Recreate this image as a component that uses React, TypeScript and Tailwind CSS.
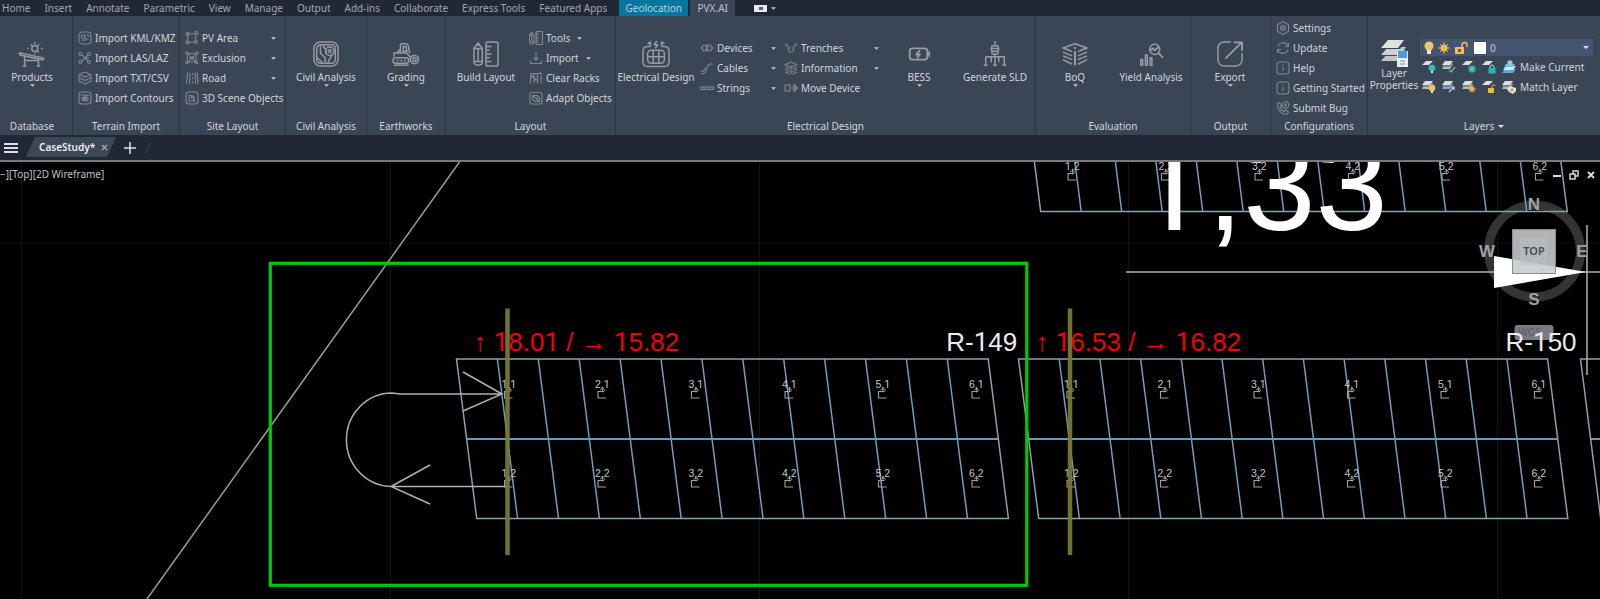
import type { ReactNode } from "react";

type IconName =
  | "products" | "civil" | "grading" | "build" | "electrical" | "bess" | "sld" | "boq" | "yield" | "export"
  | "kml" | "las" | "layers" | "contours" | "area" | "exclusion" | "road" | "scene" | "import" | "racks" | "adapt"
  | "devices" | "cables" | "strings" | "trenches" | "info" | "move" | "settings" | "update" | "help" | "phone";

const drawings: Record<IconName, ReactNode> = {
  products: (
    <>
      <circle cx="17" cy="8" r="3.2" />
      <path d="M17 1v2M17 13v1.500M10.500 8h-1.500M23.500 8h2M12.500 3.500l1.300 1.300M21.500 3.500l-1.300 1.300M21.500 12.500l-1.300-1.300" />
      <path d="M0 12.500l27 6M1 15l25 5.500M0 12.500l1 2.500M27 18.500l-1 2M6 17v10M21 20v7M6 21h15M4 27h4M19 27h4" />
    </>
  ),
  civil: (
    <>
      <rect x="1" y="1" width="26" height="26" rx="7" />
      <rect x="4" y="4" width="20" height="20" rx="4" />
      <path d="M8 5v8l5 5v5M11 5l3 5v4M4 18l6 5M21 14l-5 9" />
      <circle cx="18" cy="11" r="4.500" />
      <circle cx="18" cy="11" r="1.500" />
    </>
  ),
  grading: (
    <>
      <path d="M8 13V5c0-1.500 1-2 2-2h4c1.500 0 2 .8 2.300 2l1.700 8M11 6h3l1 5h-4zM1 17v-4h14l4 5M4 13l4-4" />
      <rect x="0" y="18" width="17" height="6" rx="3" />
      <path d="M4 21h10" strokeDasharray="2 2" />
      <circle cx="23" cy="20" r="4.500" />
      <circle cx="23" cy="20" r="2" />
      <path d="M1 26h16" />
    </>
  ),
  build: (
    <>
      <path d="M1 8l4.500-6L10 8v15c0 2-2 3-4.500 3S1 25 1 23zM1 8h9M1 22h9M5.500 8v14M4 4.500h3" />
      <rect x="14" y="1" width="13" height="26" rx="2" />
      <path d="M14 6h6M14 10h4M14 14h6M14 18h4M14 22h6" />
    </>
  ),
  electrical: (
    <>
      <path d="M8 6H5C2 6 0 8 0 11v12c0 3 2 4.500 5 4.500h18c3 0 5-1.500 5-4.500V11c0-3-2-5-5-5h-3" />
      <path d="M15 0l-3 4h4l-3 4M5 3l3-2v5M23 3l-3-2v5" />
      <rect x="5" y="10" width="18" height="14" rx="4" />
      <path d="M5 17h18M11 10v14M17 10v14" />
    </>
  ),
  bess: (
    <>
      <rect x="4" y="8" width="19" height="12" rx="3" strokeWidth="2" />
      <path d="M25 11v6M15 10l-4 4.500h4l-3 4" strokeWidth="2" />
    </>
  ),
  sld: (
    <path d="M14 0v4M11 5h6l1 3-1 6h-6l-1-6zM10 8h8M11 11h6M14 14v12M4 17h20v9M4 17v9M10 17v6M18 17v6M2 26h4M12 26h4M22 26h4" />
  ),
  boq: (
    <>
      <path d="M14 3l13 4.500-7 2.500M14 3L1 7.500l7 2.500M1 12l10 4M1 16l10 4M1 20l10 5M27 12l-10 4M27 16l-10 4M27 20l-10 5M1 7.500l10 4M27 7.500l-10 4" />
      <path d="M14 11v15M14 6.500v2" strokeWidth="2.200" />
    </>
  ),
  yield: (
    <>
      <path d="M3 26v-6h2v6zM8 26V15h2v11zM13 26v-8h2v8z" />
      <circle cx="18" cy="9" r="5.500" />
      <path d="M22 13l5 5M13 10l3-2 2 2 5-4" strokeWidth="2" />
    </>
  ),
  export: (
    <>
      <path d="M15 1H8C4 1 1 4 1 8v12c0 4 3 7 7 7h12c4 0 7-3 7-7v-7" />
      <path d="M9 19L26 2M18 1.500h9v9" strokeWidth="2" />
    </>
  ),
  kml: (
    <>
      <rect x="2" y="2" width="24" height="24" rx="7" />
      <path d="M7 8h7v6H7zM13 20c2-6 5-4 8-3M18 7l4 4M8 20l3-3" />
    </>
  ),
  las: (
    <>
      <circle cx="5" cy="6" r="3" /><circle cx="22" cy="6" r="3" /><circle cx="5" cy="22" r="3" /><circle cx="22" cy="22" r="3" />
      <path d="M8 8l12 12M20 8L8 20M14 14h8" />
    </>
  ),
  layers: <path d="M14 2L26 7 14 12 2 7zM2 7v13l12 6 12-6V7M2 13l12 6 12-6" />,
  contours: (
    <>
      <rect x="2" y="2" width="24" height="24" rx="6" />
      <path d="M6 9c5-5 11 3 16-1M6 14h16M7 19c5-3 9 3 14-1M10 12h8v4h-8z" />
    </>
  ),
  area: (
    <>
      <path d="M5 6L22 5 21 21 6 23z" />
      <circle cx="5" cy="6" r="3" /><circle cx="23" cy="4" r="3" /><circle cx="22" cy="22" r="3" /><circle cx="5" cy="23" r="3" />
    </>
  ),
  exclusion: (
    <>
      <path d="M5 5h17v17H5zM8 8l12 12M20 8L8 20M9 14h9" />
      <circle cx="4" cy="4" r="2.500" /><circle cx="24" cy="4" r="2.500" /><circle cx="23" cy="23" r="2.500" /><circle cx="4" cy="23" r="2.500" />
    </>
  ),
  road: <path d="M5 3L3 26M10 3L9 26M15 4v4M15 12v4M15 20v5M20 3l1 23M24 3l2 23" />,
  scene: (
    <>
      <rect x="2" y="2" width="24" height="24" rx="6" />
      <path d="M8 7v13h13M8 8l10 3v8M12 14h5v5M13 9v5" />
    </>
  ),
  import: <path d="M3 19v6h22v-6M14 4v14M9 13l5 5 5-5" />,
  racks: <path d="M3 5h22M3 5v20M10 5v20M17 5v20M24 9v16M3 13h7M10 18h7M5 8l14 14M22 2l4 5" />,
  adapt: (
    <>
      <rect x="2" y="3" width="24" height="23" rx="4" />
      <path d="M7 9h9l5 4v8h-9l-5-5zM7 9l14 12M12 14h6" />
    </>
  ),
  devices: (
    <>
      <circle cx="10" cy="14" r="6" /><circle cx="18" cy="14" r="6" />
      <path d="M1 14h3M24 14h3" />
    </>
  ),
  cables: <path d="M2 25c9 2 9-4 12-11s5-9 12-8M2 21c6 1 7-3 9-8" />,
  strings: <path d="M1 12h26v5H1zM8 12v5M14 12v5M20 12v5" />,
  trenches: <path d="M2 8h5l3 14h8l3-14h5M10 14h3M15 14h3M4 5v3M24 5v3" />,
  info: <path d="M14 2l12 5-12 5L2 7zM2 12l9 4M2 17l9 4M2 22l9 4M26 12l-9 4M26 17l-9 4M26 22l-9 4M14 13v13" />,
  move: <path d="M2 8h10v12H2zM15 14h11M21 8v12M18 11l3-4 3 4M18 17l3 4 3-4M24 11l3 3-3 3" />,
  settings: (
    <>
      <path d="M14 1l11 6.500v13L14 27 3 20.500v-13z" />
      <circle cx="14" cy="14" r="5" />
      <circle cx="14" cy="14" r="1.500" />
    </>
  ),
  update: <path d="M25 4v7h-7M3 24v-7h7M4 11C7 2 19 0 25 10M24 17C21 26 9 28 3 18" />,
  help: (
    <>
      <rect x="2" y="2" width="24" height="24" rx="6" />
      <path d="M14 12v8M14 7v2" />
    </>
  ),
  phone: (
    <>
      <path d="M3 5l4-2 4 6-3 3c1 4 4 7 8 9l3-3 6 4-2 4c-10 3-22-9-20-21z" />
      <circle cx="19" cy="8" r="6.500" />
      <path d="M16 8h6M19 5v6" />
    </>
  ),
};

function Icon({ name, big = false }: { name: IconName; big?: boolean }) {
  return (
    <svg
      viewBox="0 0 28 28"
      aria-hidden="true"
      className={big ? "size-[26px] shrink-0 overflow-visible text-[#989ca4]" : "size-3.5 shrink-0 text-[#808791]"}
      fill="none"
      stroke="currentColor"
      strokeWidth={big ? 1.6 : 2.2}
      strokeLinejoin="round"
    >
      {drawings[name]}
    </svg>
  );
}

function Caret({ wide = false }: { wide?: boolean }) {
  return (
    <svg viewBox="0 0 8 4" aria-hidden="true" className={wide ? "h-[3px] w-[6px] fill-[#dfe3e8]" : "h-[3px] w-[5px] fill-[#c4c8ce]"}>
      <path d="M0 0h8L4 4z" />
    </svg>
  );
}

function BigButton({ icon, label, caret = false, width }: { icon: IconName; label: string; caret?: boolean; width: string }) {
  return (
    <button type="button" className={`flex h-[54px] shrink-0 flex-col items-center ${width}`}>
      <Icon name={icon} big />
      <span className="mt-[3px] leading-[14px]">{label}</span>
      {caret && <Caret />}
    </button>
  );
}

type Row = { icon: IconName; label: string; caret?: boolean };

function Rows({ items, width, spread = true }: { items: Row[]; width: string; spread?: boolean }) {
  return (
    <div className={`flex shrink-0 flex-col ${width}`}>
      {items.map((r) => (
        <button key={r.label} type="button" className="flex h-5 items-center gap-[3px] text-left">
          <Icon name={r.icon} />
          <span>{r.label}</span>
          {r.caret && (
            <span className={spread ? "ml-auto" : "ml-1"}>
              <Caret />
            </span>
          )}
        </button>
      ))}
    </div>
  );
}

function Panel({ title, width, children, last = false, pad = "" }: { title: ReactNode; width: string; children: ReactNode; last?: boolean; pad?: string }) {
  return (
    <section className={`flex flex-col ${last ? "" : "shrink-0 border-r border-[#2b3443]"} ${width} ${pad}`}>
      <div className="flex h-[104px] items-center">{children}</div>
      <h2 className="flex h-[15px] items-start justify-center gap-1 leading-[13px]">{title}</h2>
    </section>
  );
}

const menus = ["Home", "Insert", "Annotate", "Parametric", "View", "Manage", "Output", "Add-ins", "Collaborate", "Express Tools", "Featured Apps"];

function MenuBar() {
  return (
    <nav className="flex h-4 items-stretch bg-[#212835] text-[#a3a9b2]">
      <div className="flex gap-[14px] pr-3 pl-[2px]">
        {menus.map((m) => (
          <button key={m} type="button" className="leading-[15px]">
            {m}
          </button>
        ))}
      </div>
      <button type="button" className="w-[69px] bg-[#07769f] leading-[15px] text-[#b5d3e1]">Geolocation</button>
      <button type="button" className="ml-[2px] w-[45px] bg-[#3a4555] leading-[15px] text-[#bcc2ca]">PVX.AI</button>
      <button type="button" aria-label="Ribbon display" className="ml-[19px] flex items-center gap-1">
        <span className="flex h-[7px] w-[13px] items-center justify-center bg-[#e8eaec]">
          <span className="h-[3px] w-1 bg-[#5c6470]" />
        </span>
        <Caret />
      </button>
    </nav>
  );
}

function Sheets({ blue = false }: { blue?: boolean }) {
  return (
    <g>
      <path d="M0 9l3-5h8l-3 5z" fill={blue ? "#6fb4dc" : "#b9bdc2"} />
      <path d="M0 7l3-4h8L8 7z" fill="#7d838b" />
      <path d="M0 5l3-4h8L8 5z" fill="#dcdedf" />
    </g>
  );
}

const sheet = <path d="M0 5l4-4h7L7 5z" fill="#dcdedf" />;

const layerArt: Record<string, ReactNode> = {
  off: (<>{sheet}<circle cx="10" cy="8" r="3.300" fill="#38b9bd" /><path d="M9 11h2v2H9z" fill="#e5e7e9" /></>),
  isolate: (<><Sheets /><path d="M7 10l2 2 4-5" fill="none" stroke="#55b8b8" strokeWidth="1.500" /></>),
  freeze: (<>{sheet}<circle cx="10" cy="9" r="3.800" fill="#2f9c9e" /><path d="M10 6v6M7 9h6M8 7l4 4M12 7l-4 4" stroke="#65d0cd" strokeWidth=".7" /></>),
  lock: (<>{sheet}<path d="M8 9V7a2 2 0 014 0v2" fill="none" stroke="#c9d8da" /><rect x="6.500" y="8" width="7" height="5.500" fill="#32b4b4" /></>),
  make: (<><path d="M0 13l3-4h11l-3 4z" fill="#5fa7d3" /><path d="M1 10l3-4h10l-3 4z" fill="#dbe7ee" /><path d="M2 7l2-3h9l-2 3z" fill="#74b7df" /><circle cx="8" cy="3" r="2.700" fill="#8fc6ea" /></>),
  on: (<><Sheets /><circle cx="10" cy="8" r="3.300" fill="#f0c264" /><path d="M9 11h2v2H9z" fill="#e5e7e9" /></>),
  unisolate: (<><Sheets blue /><path d="M7 12l5-5M9 7h3v3" fill="none" stroke="#c5dcea" strokeWidth="1.200" /></>),
  thaw: (<><Sheets /><circle cx="10" cy="9" r="2.500" fill="#f1b44c" /><path d="M10 5v8M6 9h8M7 6l6 6M13 6l-6 6" stroke="#f1b44c" strokeWidth=".8" /></>),
  unlock: (<>{sheet}<path d="M10 8V6a2 2 0 013.500 0" fill="none" stroke="#e8b45a" /><rect x="6" y="8" width="6" height="5" fill="#eeb556" /></>),
  match: (<><Sheets /><path d="M5 9l3-3 6 2v3l-3 3-4-2z" fill="#e8e3da" /><circle cx="10" cy="10" r="1.500" fill="#c98f4a" /></>),
};

function LayerTool({ kind, label, text }: { kind: string; label: string; text?: string }) {
  return (
    <button type="button" aria-label={label} className="flex shrink-0 items-center gap-1">
      <svg viewBox="0 0 14 14" aria-hidden="true" className="size-[14px]">{layerArt[kind]}</svg>
      {text}
    </button>
  );
}

function LayersPanel() {
  return (
    <div className="flex w-full items-start">
      <button type="button" className="flex w-[52px] shrink-0 flex-col items-center">
        <svg viewBox="0 0 28 28" aria-hidden="true" className="size-7">
          <path d="M1 22l7-8h18l-6 8z" fill="#c0c3c7" />
          <path d="M1 17l7-8h18l-6 8z" fill="#3b4555" />
          <path d="M1 16l7-8h18l-6 8z" fill="#cfd1d4" />
          <path d="M1 10l7-8h18l-6 8z" fill="#3b4555" />
          <path d="M1 9l7-8h16l-6 8z" fill="#e1e2e3" />
          <rect x="17" y="12" width="11" height="16" fill="#e9eef1" />
          <rect x="18" y="12" width="9" height="7" fill="#4b9fd6" />
          <path d="M20 12c0-3 5-3 5 0" fill="none" stroke="#8ec3e6" />
          <path d="M20 22h5M20 25h5" stroke="#8d99a3" />
        </svg>
        <span className="leading-3">
          Layer
          <br />
          Properties
        </span>
      </button>
      <div className="flex flex-1 flex-col pr-[7px]">
        <div className="flex h-[17px] items-center gap-1 bg-[#455470] pr-1 pl-[2px]">
          <svg viewBox="0 0 48 14" aria-hidden="true" className="h-[14px] w-12 shrink-0">
            <circle cx="7" cy="5" r="4.500" fill="#f6c667" />
            <path d="M5 9h4v4H5z" fill="#e9e6df" />
            <circle cx="22" cy="7" r="3.500" fill="#f2b64a" />
            <path d="M22 1v12M16 7h12M18 3l8 8M26 3l-8 8" stroke="#f2b64a" strokeWidth="1" />
            <rect x="33" y="6" width="9" height="7" fill="#f2be5c" />
            <path d="M40 6V4a2.500 2.500 0 015 0v2" fill="none" stroke="#f2be5c" strokeWidth="1.500" />
            <path d="M36 8h3v3h-3z" fill="#6b5b3a" />
          </svg>
          <span className="size-3 shrink-0 bg-white" />
          <select aria-label="Current layer" className="h-[17px] flex-1 appearance-none bg-transparent leading-4 text-[#c3c9d1] outline-none">
            <option>0</option>
          </select>
          <Caret wide />
        </div>
        <div className="mt-[1px] flex h-5 items-center gap-[6px] pl-[2px]">
          <LayerTool kind="off" label="Layer off" />
          <LayerTool kind="isolate" label="Isolate layer" />
          <LayerTool kind="freeze" label="Freeze layer" />
          <LayerTool kind="lock" label="Lock layer" />
          <LayerTool kind="make" label="Make Current" text="Make Current" />
        </div>
        <div className="flex h-5 items-center gap-[6px] pl-[2px]">
          <LayerTool kind="on" label="Layer on" />
          <LayerTool kind="unisolate" label="Unisolate layer" />
          <LayerTool kind="thaw" label="Thaw layer" />
          <LayerTool kind="unlock" label="Unlock layer" />
          <LayerTool kind="match" label="Match Layer" text="Match Layer" />
        </div>
      </div>
    </div>
  );
}

function Ribbon() {
  return (
    <div className="flex bg-[#3a4555] text-[#d3d6da]">
      <Panel title="Database" width="w-[73px]" pad="pr-2">
        <BigButton icon="products" label="Products" caret width="w-16" />
      </Panel>
      <Panel title="Terrain Import" width="w-[107px]">
        <Rows
          width="w-[106px] pl-[5px]"
          items={[
            { icon: "kml", label: "Import KML/KMZ" },
            { icon: "las", label: "Import LAS/LAZ" },
            { icon: "layers", label: "Import TXT/CSV" },
            { icon: "contours", label: "Import Contours" },
          ]}
        />
      </Panel>
      <Panel title="Site Layout" width="w-[106px]">
        <Rows
          width="w-[96px] pl-[5px]"
          items={[
            { icon: "area", label: "PV Area", caret: true },
            { icon: "exclusion", label: "Exclusion", caret: true },
            { icon: "road", label: "Road", caret: true },
            { icon: "scene", label: "3D Scene Objects" },
          ]}
        />
      </Panel>
      <Panel title="Civil Analysis" width="w-[81px]">
        <BigButton icon="civil" label="Civil Analysis" caret width="w-20" />
      </Panel>
      <Panel title="Earthworks" width="w-[79px]">
        <BigButton icon="grading" label="Grading" caret width="w-[78px]" />
      </Panel>
      <Panel title="Layout" width="w-[170px]">
        <BigButton icon="build" label="Build Layout" width="w-20" />
        <Rows
          width="w-[84px] pl-[3px]"
          spread={false}
          items={[
            { icon: "build", label: "Tools", caret: true },
            { icon: "import", label: "Import", caret: true },
            { icon: "racks", label: "Clear Racks" },
            { icon: "adapt", label: "Adapt Objects" },
          ]}
        />
      </Panel>
      <Panel title="Electrical Design" width="w-[420px]">
        <BigButton icon="electrical" label="Electrical Design" width="w-20" />
        <Rows
          width="w-[80px] pl-1"
          items={[
            { icon: "devices", label: "Devices", caret: true },
            { icon: "cables", label: "Cables", caret: true },
            { icon: "strings", label: "Strings", caret: true },
          ]}
        />
        <Rows
          width="w-[103px] pl-2"
          items={[
            { icon: "trenches", label: "Trenches", caret: true },
            { icon: "info", label: "Information", caret: true },
            { icon: "move", label: "Move Device" },
          ]}
        />
        <BigButton icon="bess" label="BESS" caret width="w-20" />
        <BigButton icon="sld" label="Generate SLD" width="w-[72px]" />
      </Panel>
      <Panel title="Evaluation" width="w-[155px]">
        <BigButton icon="boq" label="BoQ" caret width="w-[78px]" />
        <BigButton icon="yield" label="Yield Analysis" width="w-[74px]" />
      </Panel>
      <Panel title="Output" width="w-20">
        <BigButton icon="export" label="Export" caret width="w-[78px]" />
      </Panel>
      <Panel title="Configurations" width="w-[97px]">
        <Rows
          width="w-[96px] pl-[5px]"
          items={[
            { icon: "settings", label: "Settings" },
            { icon: "update", label: "Update" },
            { icon: "help", label: "Help" },
            { icon: "help", label: "Getting Started" },
            { icon: "phone", label: "Submit Bug" },
          ]}
        />
      </Panel>
      <Panel
        last
        width="min-w-[220px] flex-1"
        title={
          <>
            Layers
            <span className="pt-[5px]">
              <Caret wide />
            </span>
          </>
        }
      >
        <LayersPanel />
      </Panel>
    </div>
  );
}

function FileTabs() {
  return (
    <div className="flex h-[27px] items-stretch border-b-2 border-[#77797f] bg-[#212835] text-[#dcdfe3]">
      <button type="button" aria-label="Start menu" className="flex w-[26px] flex-col justify-center gap-[2px] pl-1">
        <span className="h-[2px] w-[14px] bg-current" />
        <span className="h-[2px] w-[14px] bg-current" />
        <span className="h-[2px] w-[14px] bg-current" />
      </button>
      <div className="mt-[2px] mb-[3px] flex w-[90px] items-center gap-[6px] bg-[#3b4657] pl-[13px] [clip-path:polygon(9px_0,100%_0,81px_100%,0_100%)]">
        <button type="button" className="font-semibold text-[#eceef0]">CaseStudy*</button>
        <button type="button" aria-label="Close CaseStudy">
          <svg viewBox="0 0 8 8" className="size-[7px] stroke-[#a9b0ba]" strokeWidth="1.500">
            <path d="M1 1l6 6M7 1L1 7" />
          </svg>
        </button>
      </div>
      <button type="button" aria-label="New drawing" className="ml-2 flex items-center">
        <svg viewBox="0 0 12 12" className="size-3 stroke-current" strokeWidth="1.500">
          <path d="M6 0v12M0 6h12" />
        </svg>
      </button>
      <svg viewBox="0 0 8 14" aria-hidden="true" className="ml-2 h-[14px] w-2 self-center stroke-[#3f4756]">
        <path d="M1 13L7 1" />
      </svg>
    </div>
  );
}

/* Plot lettering: the digit one is set in a face whose "1" has no foot. */
function Lettering({ children }: { children: string }) {
  return (
    <>
      {children.split(/(1)/).filter(Boolean).map((part, i) => (
        <tspan key={i} className={part === "1" ? "font-['Roboto',sans-serif]" : undefined}>
          {part}
        </tspan>
      ))}
    </>
  );
}

type RackProps = { x: number; y: number; pitch: number; labels?: number; rows?: number[]; id?: string; readout?: string };

const HALF = 80;
const SHEAR = 10.1;

function Tag({ x, y, text }: { x: number; y: number; text: string }) {
  return (
    <g>
      <text x={x} y={y} fontSize="10.5" fill="#c3c6c6"><Lettering>{text}</Lettering></text>
      <path d={`M${x + 9} ${y + 3.5}H${x + 3}V${y + 10}H${x + 11}`} stroke="#a2a39e" strokeWidth="1.100" fill="none" />
      <path d={`M${x + 5} ${y + 2}l3-2 2 3M${x + 7.500} ${y}v4.500`} stroke="#a2a39e" strokeWidth=".9" fill="none" />
    </g>
  );
}

function Rack({ x, y, pitch, labels, rows = [1, 2], id, readout }: RackProps) {
  const span = pitch * 13;
  const cols = Array.from({ length: 12 }, (_, i) => x + pitch * (i + 1));
  const tags = Array.from({ length: 6 }, (_, i) => i);
  return (
    <g>
      <g stroke="#6f9fba" strokeWidth="1.500" fill="none">
        {cols.map((c) => (
          <path key={c} d={`M${c} ${y}L${c + SHEAR * 2} ${y + HALF * 2 - 0.5}`} />
        ))}
        <path d={`M${x + SHEAR} ${y + HALF}h${span}`} stroke="#629bbd" strokeWidth="1.800" />
        <path d={`M${x} ${y}h${span}l${SHEAR * 2} ${HALF * 2 - 0.5}h${-span}z`} stroke="#86a3b2" />
      </g>
      {labels !== undefined &&
        tags.map((i) => rows.map((r) => <Tag key={`${i}-${r}`} x={labels + i * 93.5} y={y + 29 + (r - 1) * 89} text={`${i + 1},${r}`} />))}
      {readout && <text x={x + 17} y={y - 8} fontSize="26" fill="#f0000f"><Lettering>{readout}</Lettering></text>}
      {id && <text x={x + span - 42} y={y - 8} fontSize="26" fill="#ececec"><Lettering>{id}</Lettering></text>}
    </g>
  );
}

function Drawing() {
  return (
    <svg viewBox="0 162 1600 437" preserveAspectRatio="xMinYMin slice" role="img" aria-label="Site plan" className="absolute inset-0 size-full font-['Liberation_Sans',sans-serif]">
      <path d="M21.500 162v437M390.500 162v437M759.500 162v437M1128.500 162v437M1497.500 162v437M0 243h1600" stroke="#131313" />
      <circle cx="1534.500" cy="251" r="46" fill="none" stroke="#343434" strokeWidth="9" />
      <rect x="1514.500" y="325" width="39" height="15" rx="3" fill="#7b7a82" />
      <text x="1530" y="336" fontSize="10" textAnchor="middle" fill="#5c5c64">WCS</text>
      <path d="M459.500 162L147 599" stroke="#9a9a9a" strokeWidth="1.500" />
      <Rack x={1020.500} y={52} pitch={40.5} labels={1065} rows={[2]} />
      <Rack x={456.500} y={359} pitch={40.9} labels={501.500} id="R-149" readout="↑ 18.01 / → 15.82" />
      <Rack x={1018.500} y={359} pitch={40.7} labels={1064} id="R-150" readout="↑ 16.53 / → 16.82" />
      <Rack x={1580.500} y={359} pitch={40.7} />
      <g stroke="#b0b0b0" strokeWidth="1.500" fill="none">
        <path d="M502 394H400l-8-1a45.500 46.700 0 000 93.500h116M463 372l39 22-39 17M430 465l-39 21.500 39 17.500" />
        <path d="M1126 272h474M1587 225v150" />
      </g>
      <text x="1134" y="230" fontSize="130" fill="#fff"><Lettering>1,33</Lettering></text>
      <path d="M1494 256l92 16-92 16z" fill="#fff" />
      <path d="M507.500 308.500V555M1070 308.500V555" stroke="#7a7a36" strokeWidth="4.500" strokeOpacity=".93" />
      <rect x="270.300" y="263.300" width="756.500" height="322" fill="none" stroke="#00c80a" strokeWidth="3.200" />
      <rect x="1512.500" y="229.500" width="43" height="44" fill="#c9cbcd" fillOpacity=".88" stroke="#8b8b8b" />
      <rect x="1520" y="238" width="27" height="27" fill="#b9bfc4" fillOpacity=".5" />
      <text x="1534" y="255" fontSize="11" fontWeight="600" textAnchor="middle" fill="#454b57" className="font-['Noto_Sans',sans-serif]">TOP</text>
      <g fontSize="17" fontWeight="700" textAnchor="middle" fill="#a2a2a2">
        <text x="1534" y="210">N</text>
        <text x="1487" y="257">W</text>
        <text x="1582" y="257">E</text>
        <text x="1534" y="305">S</text>
      </g>
    </svg>
  );
}

function WindowControls() {
  return (
    <div className="absolute top-2 right-1 flex items-center gap-[7px] text-[#d8d8d8]">
      <button type="button" aria-label="Minimize">
        <svg viewBox="0 0 10 10" className="size-[10px] fill-current"><path d="M1 5h8v2H1z" /></svg>
      </button>
      <button type="button" aria-label="Restore">
        <svg viewBox="0 0 10 10" className="size-[10px] fill-none stroke-current" strokeWidth="1.500"><path d="M1 4h5v5H1zM4 4V1h5v5H6" /></svg>
      </button>
      <button type="button" aria-label="Close">
        <svg viewBox="0 0 10 10" className="size-[10px] stroke-current" strokeWidth="2"><path d="M2 2l6 6M8 2L2 8" /></svg>
      </button>
    </div>
  );
}

export default function App() {
  return (
    <div className="flex min-h-screen flex-col overflow-hidden bg-black font-['Noto_Sans',sans-serif] text-[10px] leading-[14px] whitespace-nowrap">
      <header>
        <MenuBar />
        <Ribbon />
        <FileTabs />
      </header>
      <main className="relative flex-1 overflow-hidden bg-black">
        <Drawing />
        <button type="button" className="absolute top-[5px] left-0 text-[#c0c0c0]">−][Top][2D Wireframe]</button>
        <WindowControls />
      </main>
    </div>
  );
}
